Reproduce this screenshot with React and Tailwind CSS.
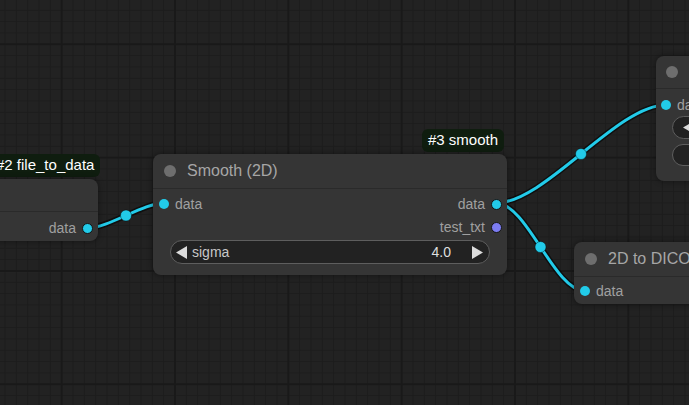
import React from "react";

const CYAN = "#22cbe9";

function Dot({ color = CYAN, ring = false }) {
  return (
    <span
      className={
        ring
          ? "block w-[11px] h-[11px] rounded-full border border-[#151515] shrink-0"
          : "block w-[10px] h-[10px] rounded-full shrink-0"
      }
      style={{ background: color }}
    />
  );
}

function Title({ text }) {
  return (
    <div className="flex items-center gap-[11px] pl-[11px] h-[35px] border-b border-[#2a2a2a] whitespace-nowrap">
      <span className="block w-3 h-3 rounded-full bg-[#6e6e6e] shrink-0" />
      {text && <span className="text-[16px] text-[#a6a6a6]">{text}</span>}
    </div>
  );
}

function Badge({ children, className }) {
  return (
    <div
      className={
        "absolute h-[23px] flex items-center px-[6px] rounded-md bg-[#0f1d0f] text-white text-[15px] whitespace-nowrap " +
        className
      }
    >
      {children}
    </div>
  );
}

function Tri({ dir }) {
  return (
    <svg width="11" height="13" viewBox="0 0 11 13" className="shrink-0">
      {dir === "left" ? (
        <polygon points="11,0 11,13 0,6.5" fill="#dcdcdc" />
      ) : (
        <polygon points="0,0 0,13 11,6.5" fill="#dcdcdc" />
      )}
    </svg>
  );
}

function Grid() {
  return (
    <defs>
      <pattern id="minor" width="11.333" height="11.333" x="4.5" y="9.8" patternUnits="userSpaceOnUse">
        <rect x="0" y="0" width="1" height="11.333" fill="#1c1c1c" />
        <rect x="0" y="0" width="11.333" height="1" fill="#1c1c1c" />
      </pattern>
      <pattern id="major" width="113.333" height="113.333" x="60.7" y="43.3" patternUnits="userSpaceOnUse">
        <rect x="0" y="0" width="2" height="113.333" fill="#191919" />
        <rect x="0" y="0" width="113.333" height="2" fill="#191919" />
      </pattern>
    </defs>
  );
}

const links = [
  { d: "M88 228 C108 228, 144 203, 164 203", mx: 126, my: 215.5 },
  { d: "M496 203 C545 203, 617 105, 666 105", mx: 581, my: 154 },
  { d: "M496 203 C527 203, 554 291, 585 291", mx: 540.5, my: 247 },
];

export default function App() {
  return (
    <div className="relative w-[689px] h-[405px] overflow-hidden bg-[#222222] font-['Liberation_Sans',Arial,sans-serif]">
      <svg className="absolute inset-0" width="689" height="405">
        <Grid />
        <rect width="689" height="405" fill="url(#minor)" />
        <rect width="689" height="405" fill="url(#major)" />
        {links.map((l, i) => (
          <g key={i}>
            <path d={l.d} fill="none" stroke="rgba(0,0,0,0.55)" strokeWidth="6" />
            <path d={l.d} fill="none" stroke={CYAN} strokeWidth="3" />
            <circle cx={l.mx} cy={l.my} r="5.5" fill={CYAN} stroke="rgba(0,0,0,0.4)" strokeWidth="1" />
          </g>
        ))}
      </svg>

      {/* #2 file_to_data */}
      <Badge className="left-[-12px] top-[154px] pl-[8px]">#2 file_to_data</Badge>
      <div className="absolute left-[-123px] top-[179px] w-[221px] h-[62px] rounded-lg bg-[#353535] shadow-[0_0_6px_rgba(0,0,0,0.45)]">
        <div className="h-[33px] border-b border-[#2a2a2a]" />
        <div className="flex items-center justify-end gap-[6px] pr-[5px] h-[22px] mt-[5px] text-[14px] text-[#a0a0a0]">
          <span>data</span>
          <Dot ring />
        </div>
      </div>

      {/* #3 smooth */}
      <Badge className="left-[422px] top-[129px]">#3 smooth</Badge>
      <div className="absolute left-[153px] top-[154px] w-[354px] h-[121px] rounded-lg bg-[#353535] shadow-[0_0_6px_rgba(0,0,0,0.45)]">
        <Title text="Smooth (2D)" />
        <div className="pt-[4px] text-[14px] text-[#a0a0a0]">
          <div className="flex items-center justify-between h-[22px] pl-[6px] pr-[5px]">
            <div className="flex items-center gap-[6px]">
              <Dot />
              <span>data</span>
            </div>
            <div className="flex items-center gap-[6px]">
              <span>data</span>
              <Dot ring />
            </div>
          </div>
          <div className="flex items-center justify-end gap-[6px] h-[22px] pr-[5px] mt-[1px]">
            <span>test_txt</span>
            <Dot ring color="#7c7cf2" />
          </div>
          <div className="mx-[17px] mt-[2px] h-[24px] rounded-full bg-[#222222] border border-[#5e5e5e] flex items-center px-[5px]">
            <Tri dir="left" />
            <span className="ml-[5px] text-[#c8c8c8]">sigma</span>
            <span className="ml-auto text-[#dedede]">4.0</span>
            <span className="ml-[21px]">
              <Tri dir="right" />
            </span>
            <span className="w-[1px]" />
          </div>
        </div>
      </div>

      {/* top right node */}
      <div className="absolute left-[656px] top-[56px] w-[240px] h-[125px] rounded-lg bg-[#353535] shadow-[0_0_6px_rgba(0,0,0,0.45)]">
        <div className="flex items-center pl-[10px] h-[33px] border-b border-[#2a2a2a]">
          <span className="block w-3 h-3 rounded-full bg-[#6e6e6e]" />
        </div>
        <div className="flex items-center gap-[6px] h-[22px] mt-[5px] pl-[5px] text-[14px] text-[#a0a0a0]">
          <Dot />
          <span>data</span>
        </div>
        <div className="ml-[16px] h-[23px] rounded-full bg-[#222222] border border-[#5e5e5e] flex items-center px-[10px]">
          <Tri dir="left" />
        </div>
        <div className="ml-[16px] mt-[5px] h-[22px] rounded-full bg-[#222222] border border-[#5e5e5e]" />
      </div>

      {/* 2D to DICOM */}
      <div className="absolute left-[574px] top-[242px] w-[240px] h-[62px] rounded-lg bg-[#353535] shadow-[0_0_6px_rgba(0,0,0,0.45)]">
        <Title text="2D to DICOM" />
        <div className="flex items-center gap-[6px] h-[22px] mt-[3px] pl-[6px] text-[14px] text-[#a0a0a0]">
          <Dot />
          <span>data</span>
        </div>
      </div>
    </div>
  );
}
